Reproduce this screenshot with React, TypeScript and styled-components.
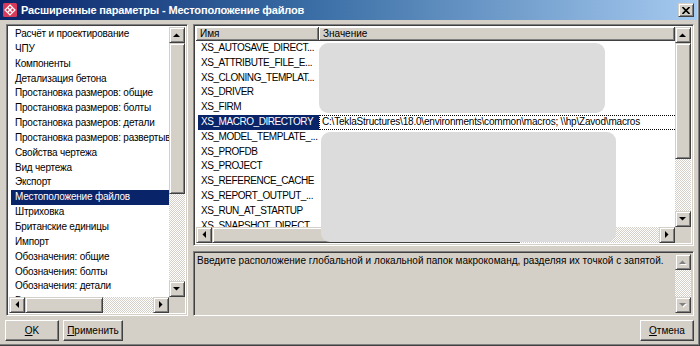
import React from 'react';
import styled, { createGlobalStyle, css } from 'styled-components';

const Global = createGlobalStyle`
  html, body { margin: 0; padding: 0; background: #d4d0c8; }
  body { font-family: "Liberation Sans", Arial, sans-serif; font-size: 10px; color: #000; }
  * { box-sizing: border-box; }
`;

const raisedBox = css`
  background: #d4d0c8;
  border: 1px solid;
  border-color: #d4d0c8 #404040 #404040 #d4d0c8;
  box-shadow: inset 1px 1px #ffffff, inset -1px -1px #808080;
`;

const sunkenBox = css`
  border: 1px solid;
  border-color: #808080 #ffffff #ffffff #808080;
  box-shadow: inset 1px 1px #404040, inset -1px -1px #d4d0c8;
`;

const checker = css`
  background: repeating-conic-gradient(#ffffff 0 25%, #d4d0c8 0 50%) 0 0 / 2px 2px;
`;

const Window = styled.div`
  width: 700px;
  height: 346px;
  background: #d4d0c8;
  display: flex;
  flex-direction: column;
  padding: 0 3px 0 0;
  box-shadow: inset -1px -1px #404040, inset -2px -2px #808080;
`;

const TitleBar = styled.div`
  height: 20px;
  display: flex;
  align-items: center;
  gap: 4px;
  padding: 0 3px 0 3px;
  background: linear-gradient(to right, #0a246a 0%, #3a6ea5 45%, #a6caf0 100%);
  flex-shrink: 0;
`;

const TitleText = styled.span`
  color: #ffffff;
  font-weight: bold;
  font-size: 11px;
  letter-spacing: -0.15px;
  white-space: nowrap;
`;

const CloseBtn = styled.div`
  ${raisedBox};
  margin-left: auto;
  width: 16px;
  height: 14px;
  display: flex;
  align-items: center;
  justify-content: center;
`;

const Body = styled.div`
  display: grid;
  grid-template-columns: 182px 501px;
  grid-template-rows: 292px 1fr;
  column-gap: 5px;
  padding: 4px 0 0 6px;
  flex: 1;
`;

const ListBox = styled.div`
  ${sunkenBox};
  background: #ffffff;
  display: grid;
  grid-template-columns: 1fr 16px;
  grid-template-rows: 1fr 16px;
  padding: 2px;
  overflow: hidden;
`;

const ListItems = styled.div`
  overflow: hidden;
  padding-left: 2px;
`;

const ListItem = styled.div<{ $sel?: boolean }>`
  height: 14.85px;
  line-height: 14.85px;
  padding-left: 4px;
  white-space: nowrap;
  overflow: hidden;
  letter-spacing: -0.2px;
  background: ${p => (p.$sel ? '#0a246a' : 'transparent')};
  color: ${p => (p.$sel ? '#ffffff' : '#000000')};
`;

const VScroll = styled.div`
  display: flex;
  flex-direction: column;
  min-height: 0;
`;

const HScroll = styled.div`
  display: flex;
  flex-direction: row;
  min-width: 0;
`;

const ScrollBtn = styled.div`
  ${raisedBox};
  width: 16px;
  height: 16px;
  flex-shrink: 0;
  display: flex;
  align-items: center;
  justify-content: center;
`;

const Thumb = styled.div<{ $size: number; $vertical?: boolean }>`
  ${raisedBox};
  flex-shrink: 0;
  ${p => (p.$vertical ? `height: ${p.$size}px; width: 16px;` : `width: ${p.$size}px; height: 16px;`)}
`;

const Track = styled.div`
  ${checker};
  flex: 1;
`;

const Corner = styled.div`
  background: #d4d0c8;
`;

const RightCol = styled.div`
  display: flex;
  flex-direction: column;
  gap: 5px;
`;

const TableBox = styled.div`
  ${sunkenBox};
  background: #ffffff;
  height: 222px;
  display: grid;
  grid-template-columns: 1fr 16px;
  grid-template-rows: 1fr 16px;
  padding: 2px;
  position: relative;
  overflow: hidden;
`;

const TableContent = styled.div`
  overflow: hidden;
  min-width: 0;
`;

const HeaderRow = styled.div`
  display: grid;
  grid-template-columns: 123px 1fr;
  height: 14px;
`;

const HeaderCell = styled.div`
  background: #d4d0c8;
  border-style: solid;
  border-color: #404040;
  border-width: 0 1px 1px 0;
  box-shadow: inset 1px 1px #ffffff, inset -1px -1px #808080;
  line-height: 13px;
  padding-left: 4px;
  white-space: nowrap;
`;

const Row = styled.div`
  display: grid;
  grid-template-columns: 123px 1fr;
  height: 14.8px;
  line-height: 14.8px;
`;

const NameCell = styled.div<{ $sel?: boolean }>`
  margin-left: 2px;
  padding-left: 3px;
  white-space: nowrap;
  overflow: hidden;
  letter-spacing: -0.45px;
  background: ${p => (p.$sel ? '#0a246a' : 'transparent')};
  color: ${p => (p.$sel ? '#ffffff' : '#000000')};
`;

const ValueCell = styled.div<{ $focus?: boolean }>`
  white-space: nowrap;
  overflow: hidden;
  padding-left: 2px;
  line-height: 12.8px;
  border: 1px dotted ${p => (p.$focus ? '#000000' : 'transparent')};
  border-right: none;
  letter-spacing: -0.2px;
`;

const Redaction = styled.div<{ $l: number; $t: number; $w: number; $h: number }>`
  position: absolute;
  left: ${p => p.$l}px;
  top: ${p => p.$t}px;
  width: ${p => p.$w}px;
  height: ${p => p.$h}px;
  background: #dcdcdc;
  border-radius: 9px;
`;

const DescBox = styled.div`
  ${sunkenBox};
  background: #d4d0c8;
  height: 65px;
  display: grid;
  grid-template-columns: 1fr 16px;
  padding: 2px;
`;

const DescText = styled.div`
  padding: 1px 0 0 1px;
  white-space: nowrap;
  overflow: hidden;
  letter-spacing: 0.02px;
`;

const ButtonRow = styled.div`
  grid-column: 1 / 3;
  display: flex;
  align-items: flex-start;
  gap: 4px;
  padding-top: 4px;
  margin-left: -1px;
`;

const Button = styled.div<{ $w: number; $right?: boolean }>`
  width: ${p => p.$w}px;
  height: 21px;
  background: #d4d0c8;
  border: 1px solid;
  border-color: #ffffff #404040 #404040 #ffffff;
  box-shadow: inset -1px -1px #808080;
  display: flex;
  align-items: center;
  justify-content: center;
  margin-left: ${p => (p.$right ? 'auto' : '0')};
  u { text-decoration: underline; }
`;

type Dir = 'up' | 'down' | 'left' | 'right';

const Arrow = ({ dir, disabled }: { dir: Dir; disabled?: boolean }) => {
  const pts: Record<Dir, string> = {
    up: '0,4 3.5,0.5 7,4',
    down: '0,0 3.5,3.5 7,0',
    left: '4,0 0.5,3.5 4,7',
    right: '0,0 3.5,3.5 0,7',
  };
  const vert = dir === 'up' || dir === 'down';
  const w = vert ? 7 : 4;
  const h = vert ? 4 : 7;
  return (
    <svg width={w + 1} height={h + 1} viewBox={`0 0 ${w + 1} ${h + 1}`}>
      {disabled && <polygon points={pts[dir]} fill="#ffffff" transform="translate(1,1)" />}
      <polygon points={pts[dir]} fill={disabled ? '#808080' : '#000000'} />
    </svg>
  );
};

const AppIcon = () => (
  <svg width="14" height="14" viewBox="0 0 14 14">
    <rect x="0" y="0" width="14" height="14" rx="1.5" fill="#d83a5a" />
    <path d="M7 2 L12 7 L7 12 L2 7 Z" fill="none" stroke="#ffffff" strokeWidth="1.2" />
    <path d="M4.5 4.5 L9.5 9.5 M9.5 4.5 L4.5 9.5" stroke="#ffffff" strokeWidth="1.1" />
    <circle cx="7" cy="7" r="1.3" fill="#ffffff" />
  </svg>
);

const CloseIcon = () => (
  <svg width="8" height="7" viewBox="0 0 8 7">
    <path d="M0.5 0 L7.5 7 M7.5 0 L0.5 7" stroke="#000" strokeWidth="1.6" />
  </svg>
);

const categories = [
  'Расчёт и проектирование',
  'ЧПУ',
  'Компоненты',
  'Детализация бетона',
  'Простановка размеров: общие',
  'Простановка размеров: болты',
  'Простановка размеров: детали',
  'Простановка размеров: развертывание',
  'Свойства чертежа',
  'Вид чертежа',
  'Экспорт',
  'Местоположение файлов',
  'Штриховка',
  'Британские единицы',
  'Импорт',
  'Обозначения: общие',
  'Обозначения: болты',
  'Обозначения: детали',
  'Вид модели',
];

const names = [
  'XS_AUTOSAVE_DIRECT...',
  'XS_ATTRIBUTE_FILE_E...',
  'XS_CLONING_TEMPLAT...',
  'XS_DRIVER',
  'XS_FIRM',
  'XS_MACRO_DIRECTORY',
  'XS_MODEL_TEMPLATE_...',
  'XS_PROFDB',
  'XS_PROJECT',
  'XS_REFERENCE_CACHE',
  'XS_REPORT_OUTPUT_...',
  'XS_RUN_AT_STARTUP',
  'XS_SNAPSHOT_DIRECT...',
  'XS_TEMPLATE_DIRECT...',
];

const macroValue = 'C:\\TeklaStructures\\18.0\\environments\\common\\macros; \\\\hp\\Zavod\\macros';

export default function App() {
  return (
    <>
      <Global />
      <Window>
        <TitleBar>
          <AppIcon />
          <TitleText>Расширенные параметры - Местоположение файлов</TitleText>
          <CloseBtn>
            <CloseIcon />
          </CloseBtn>
        </TitleBar>
        <Body>
          <ListBox>
            <ListItems>
              {categories.map(c => (
                <ListItem key={c} $sel={c === 'Местоположение файлов'}>
                  {c}
                </ListItem>
              ))}
            </ListItems>
            <VScroll>
              <ScrollBtn>
                <Arrow dir="up" />
              </ScrollBtn>
              <Thumb $vertical $size={151} />
              <Track />
              <ScrollBtn>
                <Arrow dir="down" />
              </ScrollBtn>
            </VScroll>
            <HScroll>
              <ScrollBtn>
                <Arrow dir="left" />
              </ScrollBtn>
              <Thumb $size={78} />
              <Track />
              <ScrollBtn>
                <Arrow dir="right" />
              </ScrollBtn>
            </HScroll>
            <Corner />
          </ListBox>
          <RightCol>
            <TableBox>
              <TableContent>
                <HeaderRow>
                  <HeaderCell>Имя</HeaderCell>
                  <HeaderCell>Значение</HeaderCell>
                </HeaderRow>
                {names.map(n => {
                  const sel = n === 'XS_MACRO_DIRECTORY';
                  return (
                    <Row key={n}>
                      <NameCell $sel={sel}>{n}</NameCell>
                      <ValueCell $focus={sel}>{sel ? macroValue : ''}</ValueCell>
                    </Row>
                  );
                })}
              </TableContent>
              <VScroll>
                <ScrollBtn>
                  <Arrow dir="up" />
                </ScrollBtn>
                <Thumb $vertical $size={116} />
                <Track />
                <ScrollBtn>
                  <Arrow dir="down" />
                </ScrollBtn>
              </VScroll>
              <HScroll>
                <ScrollBtn>
                  <Arrow dir="left" />
                </ScrollBtn>
                <Thumb $size={308} />
                <Track />
                <ScrollBtn>
                  <Arrow dir="right" />
                </ScrollBtn>
              </HScroll>
              <Corner />
              <Redaction $l={125} $t={18} $w={286} $h={70} />
              <Redaction $l={127} $t={107} $w={295} $h={110} />
            </TableBox>
            <DescBox>
              <DescText>
                Введите расположение глобальной и локальной папок макрокоманд, разделяя их точкой с запятой.
              </DescText>
              <VScroll>
                <ScrollBtn>
                  <Arrow dir="up" disabled />
                </ScrollBtn>
                <Track />
                <ScrollBtn>
                  <Arrow dir="down" disabled />
                </ScrollBtn>
              </VScroll>
            </DescBox>
          </RightCol>
          <ButtonRow>
            <Button $w={54}>
              <span>
                <u>O</u>K
              </span>
            </Button>
            <Button $w={60}>
              <span>
                <u>П</u>рименить
              </span>
            </Button>
            <Button $w={54} $right>
              <span>
                <u>О</u>тмена
              </span>
            </Button>
          </ButtonRow>
        </Body>
      </Window>
    </>
  );
}
